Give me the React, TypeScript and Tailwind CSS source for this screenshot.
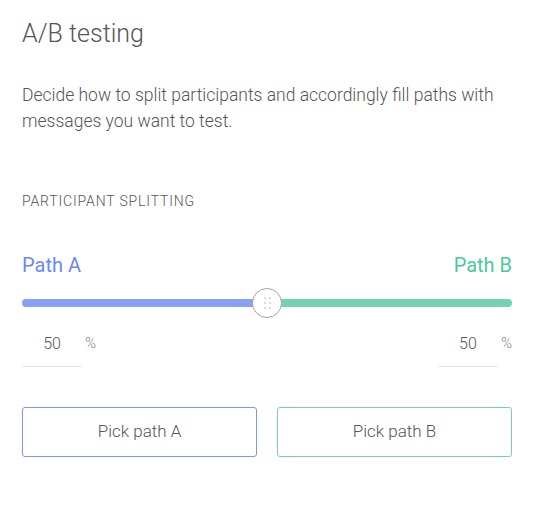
import React from "react";

function Thumb() {
  return (
    <div className="absolute left-1/2 top-1/2 -translate-x-1/2 -translate-y-1/2 w-[30px] h-[30px] rounded-full bg-white border border-[#a3a3a3] flex items-center justify-center">
      <div className="grid grid-cols-2 gap-x-[3px] gap-y-[3px]">
        {[0, 1, 2, 3, 4, 5].map((i) => (
          <span key={i} className="block w-[2px] h-[2px] rounded-full bg-[#cfcfcf]" />
        ))}
      </div>
    </div>
  );
}

function PercentInput({ value }: { value: number }) {
  return (
    <div className="flex items-start">
      <div className="w-[60px] h-[38px] border-b border-[#e6e6e6] text-center text-[16px] font-light text-[#555] leading-[24px] pt-[3px]">
        {value}
      </div>
      <span className="ml-[3px] text-[15px] font-light text-[#888] leading-[24px] pt-[2px]">%</span>
    </div>
  );
}

export default function App() {
  const split = 50;

  return (
    <div className="w-[542px] h-[508px] bg-white pl-[22px] pr-[30px] pt-[17px] font-['Roboto',sans-serif]">
      <h1 className="text-[25px] font-light text-[#555] leading-[34px]">A/B testing</h1>

      <p className="mt-[31px] text-[17.5px] font-light text-[#555] leading-[26px]">
        Decide how to split participants and accordingly fill paths with messages you want to test.
      </p>

      <div className="mt-[58px] text-[14px] font-light text-[#555] tracking-[0.06em] leading-[18px]">
        PARTICIPANT SPLITTING
      </div>

      <div className="mt-[43px] flex justify-between text-[20px] leading-[24px]">
        <span className="text-[#6e86f6]">Path A</span>
        <span className="text-[#4cc99b]">Path B</span>
      </div>

      <div className="relative mt-[22px] h-[8px] flex">
        <div className="h-full bg-[#88a0f5] rounded-l-full" style={{ width: `${split}%` }} />
        <div className="h-full flex-1 bg-[#72d2b1] rounded-r-full" />
        <Thumb />
      </div>

      <div className="mt-[22px] flex justify-between">
        <PercentInput value={split} />
        <PercentInput value={100 - split} />
      </div>

      <div className="mt-[40px] grid grid-cols-2 gap-[20px]">
        <button className="h-[50px] rounded-[3px] border border-[#7d95f2] bg-white text-[17px] font-light text-[#555]">
          Pick path A
        </button>
        <button className="h-[50px] rounded-[3px] border border-[#6fd3ad] bg-white text-[17px] font-light text-[#555]">
          Pick path B
        </button>
      </div>
    </div>
  );
}
